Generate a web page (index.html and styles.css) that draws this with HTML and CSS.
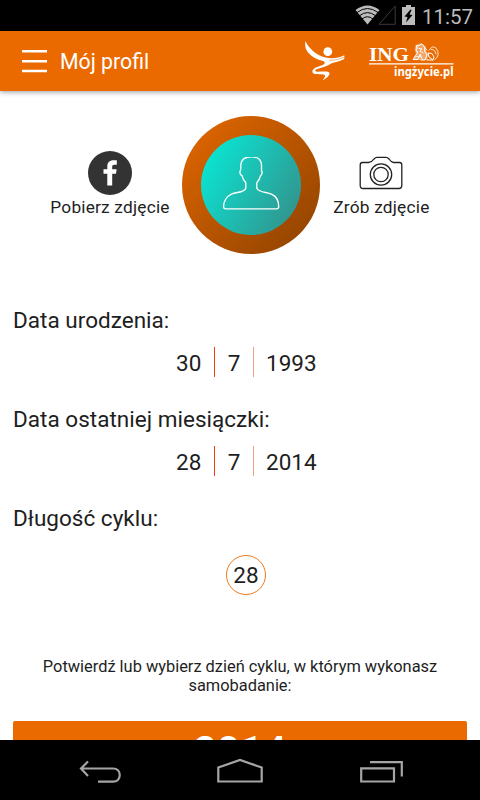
FILE: index.html
```
<!DOCTYPE html>
<html lang="pl">
<head>
<meta charset="utf-8">
<title>Mój profil</title>
<link rel="stylesheet" href="styles.css">
</head>
<body>
<div class="screen">
  <div class="status">
    <svg width="62" height="31" viewBox="354 0 62 31">
      <path d="M355.500 10Q367.500 1 379.500 10L367.500 24.500Z" fill="#bcbcbc"/>
      <g fill="none" stroke="#000" stroke-width="1"><path d="M357 12.500Q367.500 4.500 378 12.500"/><path d="M359.500 15.700Q367.500 9.500 375.500 15.700"/><path d="M362 19Q367.500 14.500 373 19"/></g>
      <path d="M379 24.300H395.200V6Z" fill="none" stroke="#3a3a3a"/>
      <path d="M402 7H406V5H411V7H415V25H402Z" fill="#bcbcbc"/>
      <path d="M410.500 9.500L404.500 16.500L407.500 17L406 22.500L412.500 15L409.500 14.500L411.500 10Z" fill="#000"/>
    </svg>
    <span class="clock">11:57</span>
  </div>
  <header class="bar">
    <svg class="burger" width="25" height="26" viewBox="0 0 25 26"><path d="M0 3.200H25M0 13.200H25M0 23H25" stroke="#fff" stroke-width="2.600"/></svg>
    <h1>Mój profil</h1>
    <svg class="logo" width="154" height="46" viewBox="303 38 154 46" fill="#fff">
      <circle cx="327.800" cy="51.700" r="4.400"/>
      <path d="M305.300 41C309 48.500 316 55 325.500 57.500C333 59.300 339 57.500 344.300 55.200V59C339 62 333 62 329.500 64.500C326 67 320 67.500 316.500 69.300C314 70.800 315.500 71.800 318 71.800C323 71.600 328.500 71 329.500 73C330 75.500 326 78.500 322.500 80.500C324.500 78 326 76 324.500 74.800C321 73.800 314 75.300 312.500 72.500C311.500 68.500 317 67 321.500 65.500C325 64 326 62.500 323 61C317 59.500 312 57 308.500 53C305 49 305 45 305.300 41Z"/>
      <path d="M329 60.300Q338 60.600 344.300 57" fill="none" stroke="#ea6a00" stroke-width=".5"/>
      <text class="ing" x="369" y="60.500" textLength="40" lengthAdjust="spacingAndGlyphs">ING</text>
      <path d="M416 45L419 43.500L423 44L426 47L426.500 51L428 54L427.500 60H412.500L416 56L415.500 52L414.500 49Z" fill-opacity=".4"/>
      <g fill="none" stroke="#fff" stroke-width="1" stroke-linecap="round">
        <path d="M417 48L416 45.500L419 46L421 43.800L423.500 45.500L425 48L424.500 51L427 55L425 60H421M417 48L416 51L418 52L416 55L413 59.500H418L420 54L422 59M419 48.500L422 49L420 51L423 53M427 60H433L429 57L428 53L432 53.500L434 57L433 60"/>
        <path d="M429.500 50Q432 45 436 48Q441 55 435 59.500M431.500 49.500Q435 49 436 54M414.500 57L421 56M424 47L427 50" stroke-width=".8"/>
      </g>
      <path d="M369 63.800H453.500" stroke="#fff" stroke-width="1.200"/>
      <text class="site" x="394" y="76" textLength="59.500" lengthAdjust="spacingAndGlyphs">ingżycie.pl</text>
    </svg>
  </header>
  <main class="content">
    <section class="photo">
      <div class="action left">
        <svg width="44" height="44" viewBox="0 0 44 44"><circle cx="22" cy="22" r="22" fill="#333"/><path d="M19.300 34.500V22.800H15.500V18.300H19.300V15.500C19.300 11.500 21.700 9.300 25.500 9.300H28.800V13.700H26.300C24.700 13.700 24.200 14.500 24.200 16V18.300H28.600L28 22.800H24.200V34.500Z" fill="#fff"/></svg>
        <span>Pobierz zdjęcie</span>
      </div>
      <div class="ring"><div class="avatar">
        <svg width="60" height="56" viewBox="222 156.800 60 56" fill="none" stroke="#fff" stroke-width="1.350" stroke-linejoin="round"><path d="M246.800 188V182.500C244.500 180 243.500 178 243 175.500C241 174.500 240.700 172 241.300 170.300C242.200 170 241.800 167 241.800 164.500C242.500 159 246.500 156.500 252.200 156.500C258 156.500 262 159 262.500 164.500V170.300C263.700 172 263 174.500 261.500 175.500C261 178 260 180.500 257.800 182.500V188C260 192.500 268 191.700 272.500 194C278 196.500 279.700 202 279.700 206.500Q279.700 208.600 277.500 208.600H226.500Q224.600 208.600 224.600 206.500C224.600 202 227 196.500 232.500 194C237 191.700 245.500 192.500 246.800 188Z"/></svg>
      </div></div>
      <div class="action right">
        <svg width="44" height="44" viewBox="0 0 44 44" fill="none" stroke="#222" stroke-width="1.300" stroke-linejoin="round"><path d="M3.500 11.500H9.500Q13 11 15 8Q16.500 6.300 18 6.300H27Q28.500 6.300 30 8Q32 11 34.500 11.500H40.500Q42.800 11.500 42.800 14V34.500Q42.800 37.500 40 37.500H4Q1.200 37.500 1.200 34.500V14Q1.200 11.500 3.500 11.500Z"/><circle cx="22" cy="23.500" r="10.700"/><circle cx="22" cy="23.500" r="7.200"/></svg>
        <span>Zrób zdjęcie</span>
      </div>
    </section>
    <h2>Data urodzenia:</h2>
    <div class="date"><span class="day">30</span><i></i><span class="month">7</span><i class="pale"></i><span class="yr">1993</span></div>
    <h2>Data ostatniej miesiączki:</h2>
    <div class="date"><span class="day">28</span><i></i><span class="month">7</span><i class="pale"></i><span class="yr">2014</span></div>
    <h2>Długość cyklu:</h2>
    <div class="cycle">28</div>
    <p>Potwierdź lub wybierz dzień cyklu, w którym wykonasz samobadanie:</p>
    <div class="year">2014</div>
  </main>
  <nav class="nav">
    <svg width="480" height="60" viewBox="0 740 480 60" fill="none" stroke="#a5a5a5" stroke-width="2.200"><path d="M88 761.500L81 768.500L88 776M81 768.500H113C122 768.500 122 781.700 113 781.700H98"/><path d="M218.300 781.500V767.500L240 760L261.700 767.500V781.500Z"/><path d="M361.200 768.300H394V781.500H361.200ZM370 762.200H401.800V776.500"/></svg>
  </nav>
</div>
</body>
</html>
```
FILE: styles.css
```
* { box-sizing: border-box; }
body { margin: 0; font-family: Roboto, "Noto Sans", sans-serif; color: #1e1e1e; background: #fff; }
svg { display: block; flex: none; }
.screen { width: 480px; height: 800px; display: flex; flex-direction: column; overflow: hidden; }
.status { height: 31px; flex: none; background: #000; display: flex; align-items: center; justify-content: flex-end; padding-right: 8px; }
.clock { width: 50px; margin-left: 6px; padding-top: 2px; font-size: 20.5px; line-height: 30px; color: #bcbcbc; white-space: nowrap; }
.bar { height: 60px; flex: none; background: #ea6a00; display: flex; align-items: center; padding: 0 23px 0 22px; box-shadow: 0 1px 5px rgba(0,0,0,.4); position: relative; }
h1 { margin: 2px 0 0 13px; font-size: 21.3px; line-height: 28px; font-weight: 400; color: #fff; white-space: nowrap; }
.logo { margin-left: auto; }
.ing { font: bold 18.5px "Liberation Serif", serif; }
.site { font: bold 12px "Noto Sans", sans-serif; }
.content { flex: 1; min-height: 0; overflow: hidden; padding: 0 13px; }
.photo { display: flex; height: 187px; padding: 25px 0 0 49px; gap: 12px; margin: 0 -13px; }
.action { display: flex; flex-direction: column; align-items: center; padding-top: 35px; font-size: 17.3px; letter-spacing: .2px; line-height: 25px; white-space: nowrap; }
.left { width: 122px; }
.right { width: 98px; }
.ring { width: 138px; height: 138px; margin-left: -.6px; border-radius: 50%; padding: 19px; background: linear-gradient(135deg, #dc6400 10%, #944500 90%); flex: none; }
.avatar { width: 100px; height: 100px; border-radius: 50%; background: linear-gradient(120deg, #0ce0cf 15%, #31968f 88%); display: flex; align-items: center; justify-content: center; }
h2 { margin: 27px 0 0; font-size: 22.5px; letter-spacing: .02px; line-height: 30px; font-weight: 400; white-space: nowrap; }
.date { display: flex; align-items: center; height: 30px; margin-top: 12px; padding-left: 163px; font-size: 22.5px; line-height: 31px; }
.date span { padding-top: 2px; }
.day { width: 38px; }
.month { width: 38px; text-align: center; }
.yr { margin-left: 12px; }
.date i { width: 1px; height: 30px; background: #ef3c0c; }
.date i.pale { background: #eda284; }
.cycle { width: 40px; height: 40px; margin: 22px auto 0 213px; border: 1.5px solid #ee7a1c; border-radius: 50%; font-size: 22.5px; line-height: 39px; text-align: center; }
p { margin: 62px 10px 0; font-size: 16.4px; line-height: 19px; text-align: center; }
.year { margin-top: 26px; height: 60px; border-radius: 2px; background: #ea6a00; color: #fff; font-size: 41px; line-height: 60px; font-weight: 500; text-align: center; }
.nav { height: 60px; flex: none; background: #000; }
```
